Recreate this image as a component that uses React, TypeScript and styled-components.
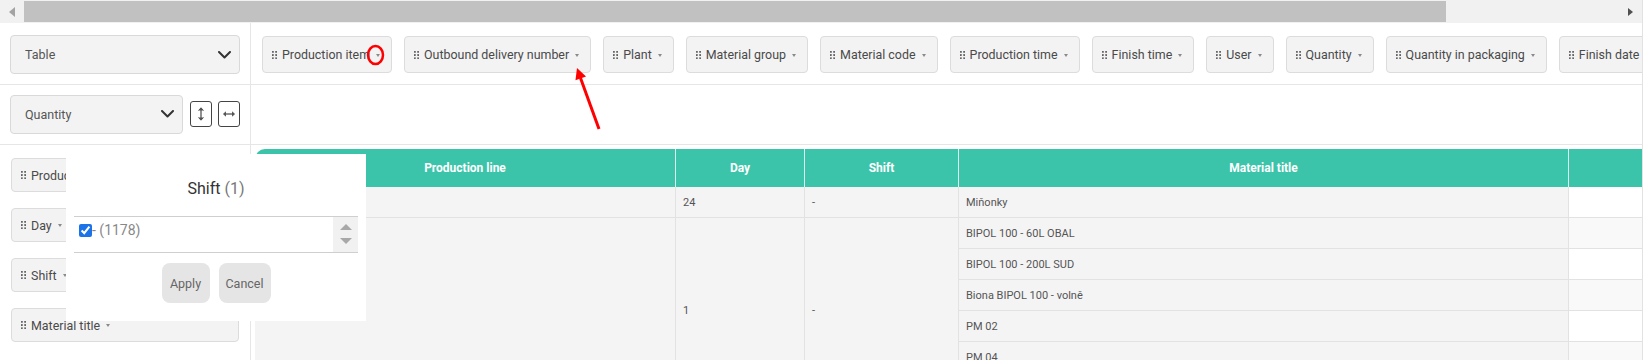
import React from "react";
import styled, { createGlobalStyle } from "styled-components";

const Global = createGlobalStyle`
  html, body { margin: 0; padding: 0; background: #fff; }
  body { font-family: Roboto, "Liberation Sans", Arial, sans-serif; color: #444; }
  * { box-sizing: border-box; }
`;

const Page = styled.div`
  position: relative;
  width: 1643px;
  height: 360px;
  border-right: 1px solid #e2e2e2;
  overflow: hidden;
`;

/* ---------- horizontal scrollbar ---------- */
const Scrollbar = styled.div`
  display: flex;
  align-items: center;
  height: 23px;
  background: #f1f1f1;
`;
const ScrollBtn = styled.div`
  width: 24px;
  height: 23px;
  display: flex;
  align-items: center;
  justify-content: center;
  flex: none;
`;
const ArrowLeft = styled.span`
  width: 0;
  height: 0;
  border-top: 5px solid transparent;
  border-bottom: 5px solid transparent;
  border-right: 6px solid #a3a3a3;
`;
const ArrowRight = styled.span`
  width: 0;
  height: 0;
  border-top: 4px solid transparent;
  border-bottom: 4px solid transparent;
  border-left: 5px solid #505050;
`;
const Thumb = styled.div`
  width: 1422px;
  height: 21px;
  background: #c1c1c1;
  flex: none;
`;
const Track = styled.div`
  flex: 1;
`;

/* ---------- pivot grid ---------- */
const Pivot = styled.div`
  display: grid;
  grid-template-columns: 251px 1fr;
  grid-template-rows: 62px 60px 1fr;
  height: 337px;
`;
const Cell = styled.div<{ $left?: boolean; $last?: boolean }>`
  border-right: ${(p) => (p.$left ? "1px solid #e6e6e6" : "none")};
  border-bottom: ${(p) => (p.$last ? "none" : "1px solid #e6e6e6")};
  overflow: hidden;
  min-width: 0;
`;
const TopLeft = styled(Cell)`
  padding: 12px 10px 0;
`;
const TopRight = styled(Cell)`
  display: flex;
  gap: 12px;
  padding: 13px 0 0 11px;
  white-space: nowrap;
`;
const MidLeft = styled(Cell)`
  display: flex;
  align-items: center;
  padding: 0 10px 1px;
`;
const RowsLeft = styled(Cell)`
  display: flex;
  flex-direction: column;
  gap: 16px;
  padding: 13px 11px 0;
`;
const TableArea = styled(Cell)`
  padding: 4px 0 0 4px;
`;

const SelectBox = styled.div<{ $w: number }>`
  width: ${(p) => p.$w}px;
  height: 39px;
  display: flex;
  align-items: center;
  justify-content: space-between;
  padding: 0 8px 0 14px;
  background: #f3f3f3;
  border: 1px solid #d9d9d9;
  border-radius: 4px;
  font-size: 12.5px;
  color: #555;
`;

const IconBtn = styled.div<{ $gap: number }>`
  width: 22px;
  height: 26px;
  margin-left: ${(p) => p.$gap}px;
  border: 1px solid #444;
  border-radius: 3px;
  background: #fff;
  display: flex;
  align-items: center;
  justify-content: center;
`;

const Chip = styled.div<{ $full?: boolean }>`
  display: flex;
  align-items: center;
  flex: none;
  height: ${(p) => (p.$full ? 34 : 37)}px;
  width: ${(p) => (p.$full ? "228px" : "auto")};
  padding: 0 11px 0 9px;
  background: #f3f3f3;
  border: 1px solid #dcdcdc;
  border-radius: 4px;
  font-size: 12.43px;
  color: #4a4a4a;
  white-space: nowrap;
`;
const ChipLabel = styled.span`
  margin: 0 6px 0 5px;
`;
const Caret = styled.span`
  width: 0;
  height: 0;
  border-left: 2.5px solid transparent;
  border-right: 2.5px solid transparent;
  border-top: 3.5px solid #8a8a8a;
  margin-top: 1px;
`;

/* ---------- table ---------- */
const Table = styled.table`
  border-collapse: separate;
  border-spacing: 0;
  table-layout: fixed;
  width: 1434px;
`;
const Th = styled.th<{ $first?: boolean }>`
  height: 38px;
  padding: 0 6px;
  background: #3bc4a9;
  color: #fff;
  font-weight: 700;
  font-size: 12px;
  text-align: center;
  border-right: 1px solid #d9f3ee;
  border-top-left-radius: ${(p) => (p.$first ? "10px" : "0")};
  white-space: nowrap;
`;
const Td = styled.td<{ $data?: boolean; $alt?: boolean }>`
  height: 31px;
  padding: 0 7px;
  font-size: 11px;
  color: #555;
  vertical-align: middle;
  white-space: nowrap;
  background: ${(p) => (p.$data ? (p.$alt ? "#f9f9f9" : "#ffffff") : "#f4f4f4")};
  border-right: 1px solid #e2e2e2;
  border-bottom: 1px solid #e2e2e2;
`;

/* ---------- popup ---------- */
const Popup = styled.div`
  position: absolute;
  left: 66px;
  top: 154px;
  width: 300px;
  height: 167px;
  background: #fff;
  display: flex;
  flex-direction: column;
  align-items: center;
  padding: 23px 8px 0;
`;
const PopupTitle = styled.div`
  font-size: 16px;
  line-height: 24px;
  color: #333;
  height: 24px;
`;
const Muted = styled.span`
  color: #777;
`;
const ListBox = styled.div`
  margin-top: 15px;
  width: 284px;
  height: 37px;
  border-top: 1px solid #cfcfcf;
  border-bottom: 1px solid #cfcfcf;
  display: flex;
`;
const ListItem = styled.label`
  flex: 1;
  display: flex;
  align-items: flex-start;
  padding: 6px 0 0 5px;
  font-size: 14px;
  color: #888;
  line-height: 15px;
`;
const Check = styled.input`
  width: 13px;
  height: 13px;
  margin: 1px 0 0;
  accent-color: #1a73e8;
`;
const ListScroll = styled.div`
  width: 25px;
  background: #f1f1f1;
  display: flex;
  flex-direction: column;
  align-items: center;
  justify-content: space-between;
  padding: 7px 0 8px;
`;
const TriUp = styled.span`
  border-left: 6px solid transparent;
  border-right: 6px solid transparent;
  border-bottom: 6px solid #a8a8a8;
`;
const TriDown = styled.span`
  border-left: 6px solid transparent;
  border-right: 6px solid transparent;
  border-top: 6px solid #a8a8a8;
`;
const Buttons = styled.div`
  display: flex;
  gap: 9px;
  margin-top: 10px;
`;
const Btn = styled.div<{ $w: number }>`
  width: ${(p) => p.$w}px;
  height: 40px;
  border-radius: 8px;
  background: #e5e5e5;
  color: #666;
  font-size: 12.5px;
  display: flex;
  align-items: center;
  justify-content: center;
`;

const Annotation = styled.svg`
  position: absolute;
  left: 0;
  top: 0;
  pointer-events: none;
`;

const Dots = () => (
  <svg width="5" height="8" viewBox="0 0 5 8" style={{ flex: "none" }}>
    {[0.9, 4.1].map((x) =>
      [0.9, 4, 7.1].map((y) => <circle key={`${x}-${y}`} cx={x} cy={y} r="0.95" fill="#555" />)
    )}
  </svg>
);

const Chevron = () => (
  <svg width="13" height="8" viewBox="0 0 13 8">
    <polyline points="1,1 6.5,6.5 12,1" fill="none" stroke="#333" strokeWidth="2" strokeLinecap="round" strokeLinejoin="round" />
  </svg>
);

const FieldChip = ({ label, full }: { label: string; full?: boolean }) => (
  <Chip $full={full}>
    <Dots />
    <ChipLabel>{label}</ChipLabel>
    <Caret />
  </Chip>
);

const topFields = [
  "Production item",
  "Outbound delivery number",
  "Plant",
  "Material group",
  "Material code",
  "Production time",
  "Finish time",
  "User",
  "Quantity",
  "Quantity in packaging",
  "Finish date",
  "Finish shift",
];
const rowFields = ["Production line", "Day", "Shift", "Material title"];

const materials = [
  "BIPOL 100 - 60L OBAL",
  "BIPOL 100 - 200L SUD",
  "Biona BIPOL 100 - volně",
  "PM 02",
  "PM 04",
  "PM 06",
];

export default function App() {
  return (
    <>
      <Global />
      <Page>
        <Scrollbar>
          <ScrollBtn>
            <ArrowLeft />
          </ScrollBtn>
          <Thumb />
          <Track />
          <ScrollBtn>
            <ArrowRight />
          </ScrollBtn>
        </Scrollbar>

        <Pivot>
          <TopLeft $left>
            <SelectBox $w={230}>
              <span>Table</span>
              <Chevron />
            </SelectBox>
          </TopLeft>
          <TopRight>
            {topFields.map((f) => (
              <FieldChip key={f} label={f} />
            ))}
          </TopRight>

          <MidLeft $left>
            <SelectBox $w={173}>
              <span>Quantity</span>
              <Chevron />
            </SelectBox>
            <IconBtn $gap={7}>
              <svg width="8" height="16" viewBox="0 0 8 16">
                <line x1="4" y1="2" x2="4" y2="14" stroke="#555" strokeWidth="1.3" />
                <polyline points="1.5,4.5 4,1.8 6.5,4.5" fill="#555" stroke="#555" strokeWidth="1" />
                <polyline points="1.5,11.5 4,14.2 6.5,11.5" fill="#555" stroke="#555" strokeWidth="1" />
              </svg>
            </IconBtn>
            <IconBtn $gap={6}>
              <svg width="14" height="8" viewBox="0 0 14 8">
                <line x1="2" y1="4" x2="12" y2="4" stroke="#555" strokeWidth="1.3" />
                <polyline points="4,1.8 1.5,4 4,6.2" fill="#555" stroke="#555" strokeWidth="1" />
                <polyline points="10,1.8 12.5,4 10,6.2" fill="#555" stroke="#555" strokeWidth="1" />
              </svg>
            </IconBtn>
          </MidLeft>
          <Cell />

          <RowsLeft $left $last>
            {rowFields.map((f) => (
              <FieldChip key={f} label={f} full />
            ))}
          </RowsLeft>
          <TableArea $last>
            <Table>
              <colgroup>
                <col style={{ width: 421 }} />
                <col style={{ width: 129 }} />
                <col style={{ width: 154 }} />
                <col style={{ width: 610 }} />
                <col style={{ width: 120 }} />
              </colgroup>
              <thead>
                <tr>
                  <Th $first>Production line</Th>
                  <Th>Day</Th>
                  <Th>Shift</Th>
                  <Th>Material title</Th>
                  <Th />
                </tr>
              </thead>
              <tbody>
                <tr>
                  <Td />
                  <Td>24</Td>
                  <Td>-</Td>
                  <Td>Miňonky</Td>
                  <Td $data />
                </tr>
                {materials.map((m, i) => (
                  <tr key={m}>
                    {i === 0 && (
                      <>
                        <Td rowSpan={materials.length} />
                        <Td rowSpan={materials.length}>1</Td>
                        <Td rowSpan={materials.length}>-</Td>
                      </>
                    )}
                    <Td>{m}</Td>
                    <Td $data $alt={i % 2 === 0} />
                  </tr>
                ))}
              </tbody>
            </Table>
          </TableArea>
        </Pivot>

        <Popup>
          <PopupTitle>
            Shift <Muted>(1)</Muted>
          </PopupTitle>
          <ListBox>
            <ListItem>
              <Check type="checkbox" defaultChecked />
              <span>- (1178)</span>
            </ListItem>
            <ListScroll>
              <TriUp />
              <TriDown />
            </ListScroll>
          </ListBox>
          <Buttons>
            <Btn $w={48}>Apply</Btn>
            <Btn $w={52}>Cancel</Btn>
          </Buttons>
        </Popup>

        <Annotation width="1649" height="360" viewBox="0 0 1649 360">
          <ellipse cx="375.5" cy="55" rx="7.5" ry="9" fill="none" stroke="#ff0000" strokeWidth="2.5" />
          <line x1="599" y1="129" x2="580.5" y2="78" stroke="#ff0000" strokeWidth="3" />
          <polygon points="577,68 586,76.5 575.5,80.3" fill="#ff0000" />
        </Annotation>
      </Page>
    </>
  );
}
